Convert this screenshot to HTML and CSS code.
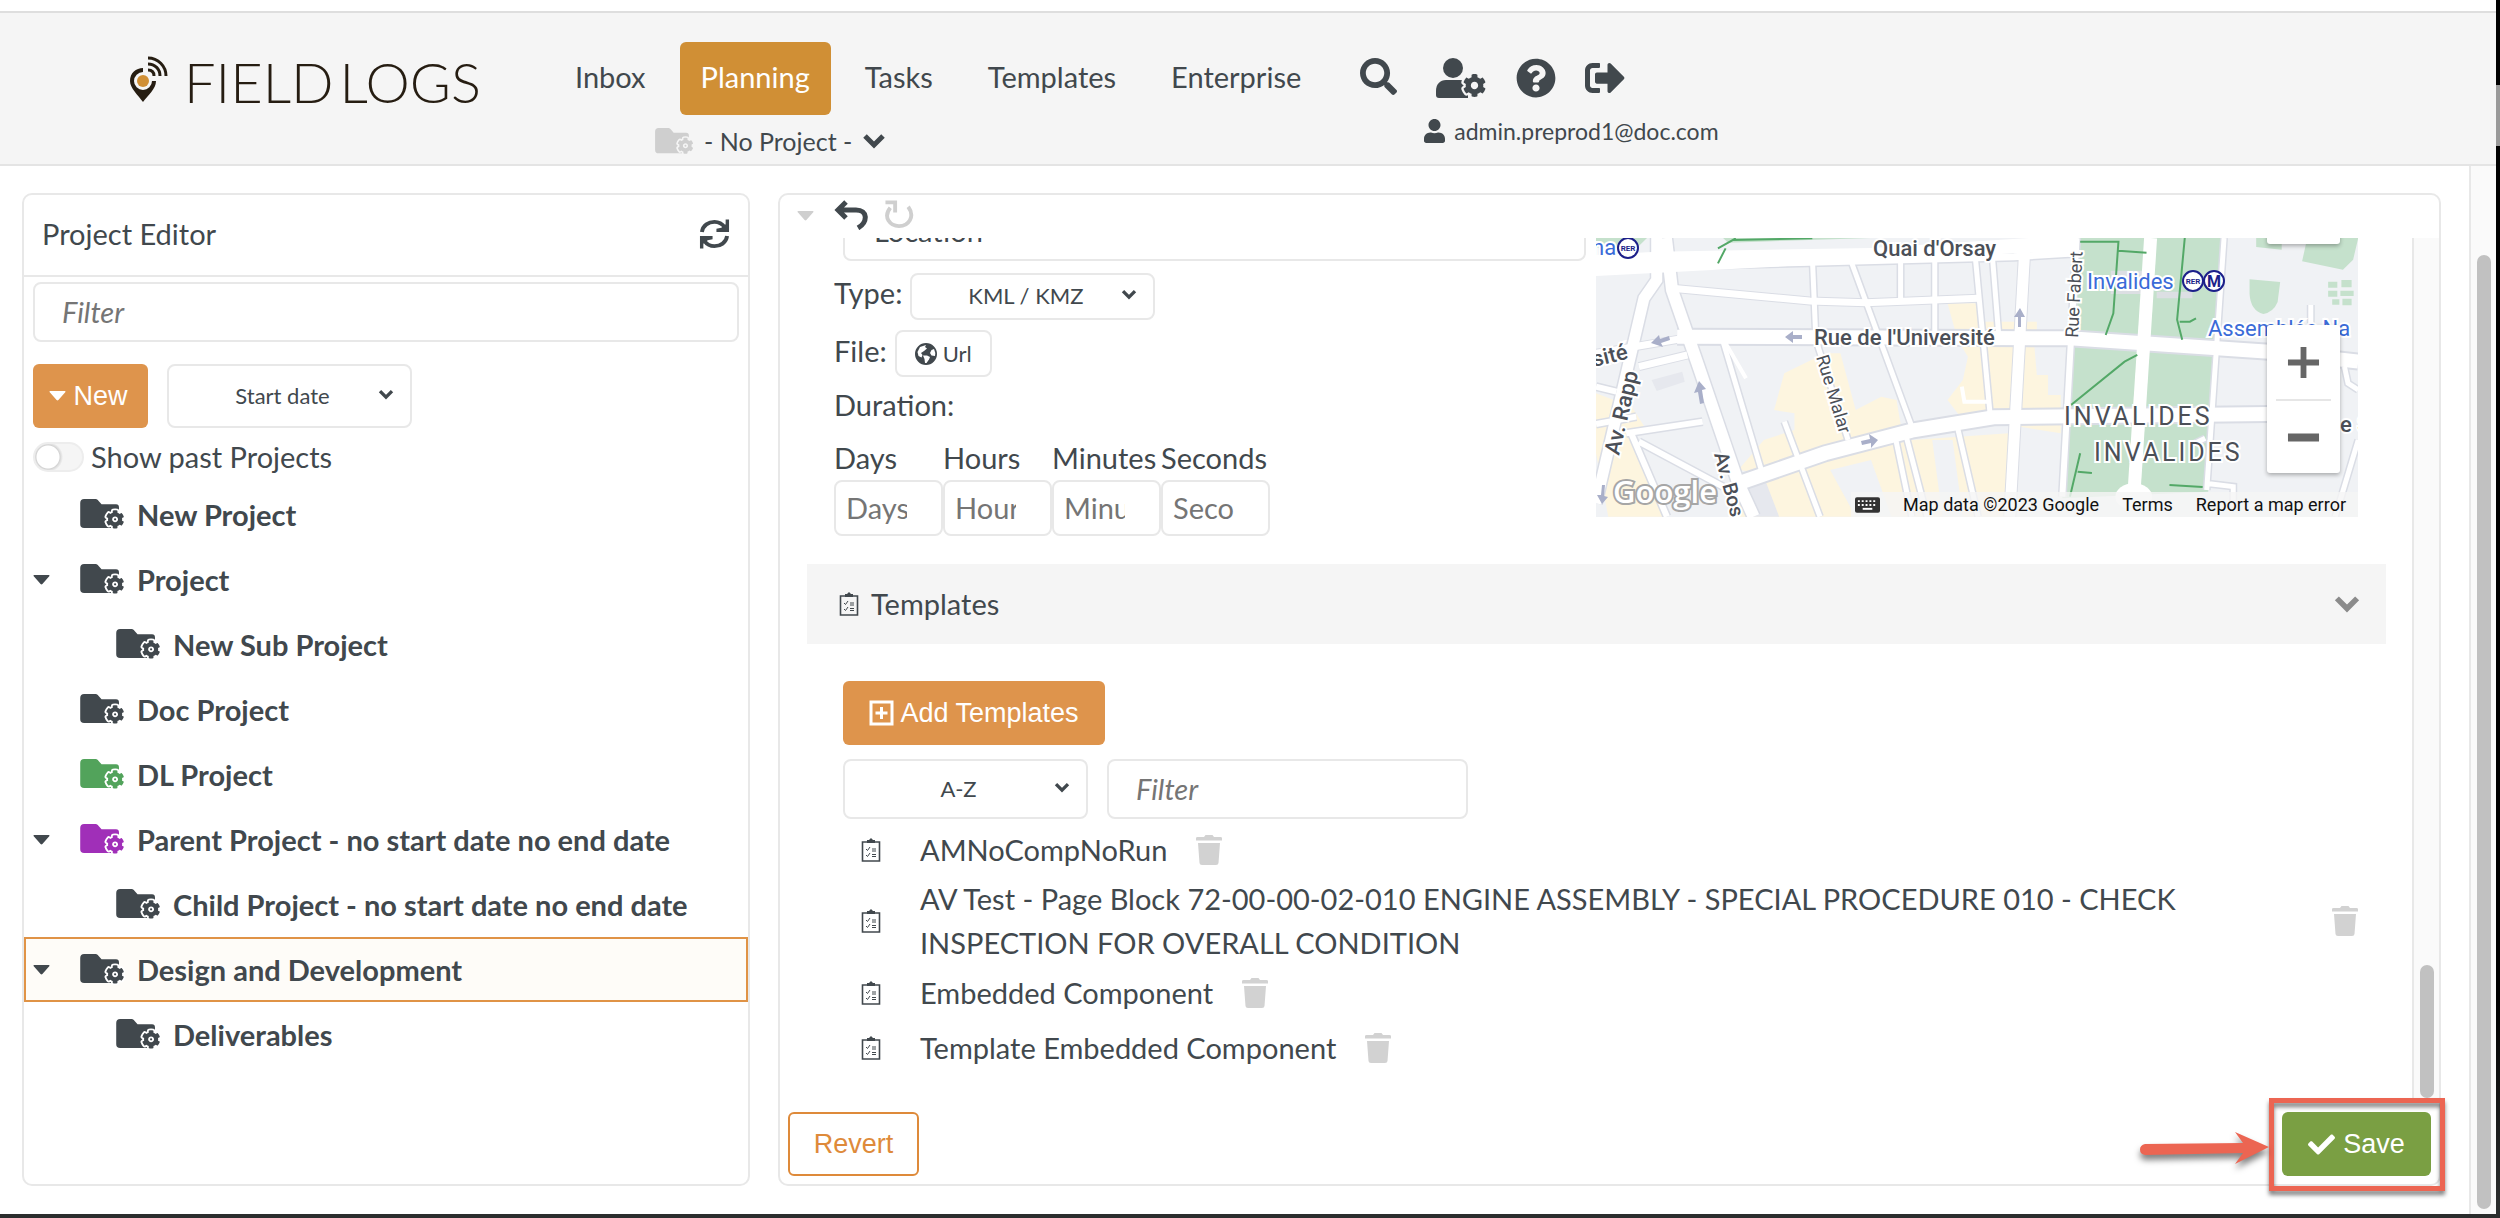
FILE: index.html
```html
<!DOCTYPE html>
<html lang="en">
<head>
<meta charset="UTF-8">
<meta name="viewport" content="width=device-width, initial-scale=1">
<title>Field Logs - Planning</title>
<link rel="stylesheet" href="styles.css">
</head>
<body>

<!-- shared icons -->
<svg class="sprite" aria-hidden="true">
  <symbol id="i-search" viewBox="0 0 512 512"><path d="M505 442.7L405.3 343c-4.5-4.5-10.6-7-17-7H372c27.6-35.3 44-79.7 44-128C416 93.1 322.9 0 208 0S0 93.1 0 208s93.1 208 208 208c48.3 0 92.7-16.4 128-44v16.3c0 6.4 2.5 12.5 7 17l99.7 99.7c9.4 9.4 24.6 9.4 33.9 0l28.3-28.3c9.4-9.4 9.4-24.6.1-34zM208 336c-70.7 0-128-57.2-128-128 0-70.7 57.2-128 128-128 70.7 0 128 57.2 128 128 0 70.7-57.2 128-128 128z"/></symbol>
  <symbol id="i-help" viewBox="0 0 512 512"><path d="M504 256c0 136.997-111.043 248-248 248S8 392.997 8 256C8 119.083 119.043 8 256 8s248 111.083 248 248zM262.655 90c-54.497 0-89.255 22.957-116.549 63.758-3.536 5.286-2.353 12.415 2.715 16.258l34.699 26.31c5.205 3.947 12.621 3.008 16.665-2.122 17.864-22.658 30.113-35.797 57.303-35.797 20.429 0 45.698 13.148 45.698 32.958 0 14.976-12.363 22.667-32.534 33.976C247.128 238.528 216 254.941 216 296v4c0 6.627 5.373 12 12 12h56c6.627 0 12-5.373 12-12v-1.333c0-28.462 83.186-29.647 83.186-106.667 0-58.002-60.165-102-116.531-102zM256 338c-25.365 0-46 20.635-46 46 0 25.364 20.635 46 46 46s46-20.636 46-46c0-25.365-20.635-46-46-46z"/></symbol>
  <symbol id="i-logout" viewBox="0 0 512 512"><path d="M497 273L329 441c-15 15-41 4.5-41-17v-96H152c-13.3 0-24-10.7-24-24v-96c0-13.3 10.7-24 24-24h136V88c0-21.4 25.9-32 41-17l168 168c9.3 9.4 9.3 24.6 0 34zM192 436v-40c0-6.6-5.4-12-12-12H96c-17.7 0-32-14.3-32-32V160c0-17.7 14.3-32 32-32h84c6.6 0 12-5.4 12-12V76c0-6.6-5.4-12-12-12H96c-53 0-96 43-96 96v192c0 53 43 96 96 96h84c6.6 0 12-5.4 12-12z"/></symbol>
  <symbol id="i-user" viewBox="0 0 448 512"><path d="M224 256c70.7 0 128-57.3 128-128S294.7 0 224 0 96 57.3 96 128s57.3 128 128 128zm89.6 32h-16.7c-22.2 10.2-46.9 16-72.9 16s-50.6-5.8-72.9-16h-16.7C60.2 288 0 348.2 0 422.4V464c0 26.5 21.5 48 48 48h352c26.5 0 48-21.5 48-48v-41.6c0-74.2-60.2-134.4-134.4-134.4z"/></symbol>
  <symbol id="i-cog" viewBox="-60 -60 632 632"><path d="M487.4 315.7l-42.6-24.6c4.3-23.2 4.3-47 0-70.2l42.6-24.6c4.9-2.8 7.1-8.6 5.5-14-11.1-35.6-30-67.8-54.7-94.6-3.8-4.1-10-5.1-14.8-2.3L380.8 110c-17.9-15.4-38.5-27.3-60.8-35.1V25.8c0-5.6-3.9-10.5-9.4-11.7-36.7-8.2-74.3-7.8-109.2 0-5.5 1.2-9.4 6.1-9.4 11.7V75c-22.2 7.9-42.8 19.8-60.8 35.1L88.7 85.5c-4.9-2.8-11-1.9-14.8 2.3-24.7 26.7-43.6 58.9-54.7 94.6-1.7 5.4.6 11.2 5.5 14L67.3 221c-4.3 23.2-4.3 47 0 70.2l-42.6 24.6c-4.9 2.8-7.1 8.6-5.5 14 11.1 35.6 30 67.8 54.7 94.6 3.8 4.1 10 5.1 14.8 2.3l42.6-24.6c17.9 15.4 38.5 27.3 60.8 35.1v49.2c0 5.6 3.9 10.5 9.4 11.7 36.7 8.2 74.3 7.8 109.2 0 5.5-1.2 9.4-6.1 9.4-11.7v-49.2c22.2-7.9 42.8-19.8 60.8-35.1l42.6 24.6c4.9 2.8 11 1.9 14.8-2.3 24.7-26.7 43.6-58.9 54.7-94.6 1.5-5.5-.7-11.3-5.6-14.1zM256 336c-44.1 0-80-35.9-80-80s35.9-80 80-80 80 35.9 80 80-35.9 80-80 80z"/></symbol>
  <symbol id="i-usercog" viewBox="0 0 52 42">
    <circle cx="18" cy="11" r="10"/><path d="M11 23h14c3 0 6 2 8 5v13H4c-2 0-3-1-3-3v-4c0-7 4-11 10-11z"/>
    <use href="#i-cog" class="halo" x="25" y="14" width="29" height="29"/>
  </symbol>
  <symbol id="i-folder" viewBox="0 0 46 32">
    <path d="M4 0h11c2 0 3 .6 4 2l3 3.500h15c2 0 3 1 3 3V30H4c-2.500 0-4-1.500-4-4V4c0-2.500 1.500-4 4-4z"/>
    <use href="#i-cog" class="halo" x="24" y="9" width="24" height="24"/>
  </symbol>
  <symbol id="i-down" viewBox="0 0 24 16"><path d="M3 3l9 9 9-9" class="line" stroke-width="5"/></symbol>
  <symbol id="i-caret" viewBox="0 0 18 11"><path d="M1 0h16c1 0 1 1 .5 1.500L10 10c-.6.700-1.400.7-2 0L.5 1.500C0 1 0 0 1 0z"/></symbol>
  <symbol id="i-refresh" viewBox="0 0 32 30">
    <path d="M3 13C4 6 10 2.500 16 2.500c4.500 0 8 2 10.500 5.500M29 17c-1 7-7 10.500-13 10.500-4.500 0-8-2-10.500-5.500" class="line" stroke-width="4"/>
    <path d="M31 0v13H18v-3.500l5-1L27.500 5V0zM1 30V17h13v3.500l-5 1L4.500 25v5z"/>
  </symbol>
  <symbol id="i-undo" viewBox="0 0 34 30"><path d="M12 2L4 10 12 18M4 10h18c12 0 12 12 2 18" class="line" stroke-width="5"/></symbol>
  <symbol id="i-redo" viewBox="0 0 30 30"><path d="M6 8c-8 10 0 19 9 19 10 0 17-10 9.500-20M1 2.500h10V13" class="line" stroke-width="4"/></symbol>
  <symbol id="i-clip" viewBox="0 0 20 24">
    <path d="M1.500 4h17v19h-17z" class="line" stroke-width="1.600"/><path d="M6 5V2h2l2-2 2 2h2v3z"/>
    <path d="M5 11l1.500 1.500L9 9M5 17l1.500 1.500L9 15M11 11h4M11 13h4M11 16.500h4M11 18.500h4" class="line" stroke-width="1"/>
  </symbol>
  <symbol id="i-trash" viewBox="0 0 26 30"><path d="M1.500 2H8l1.500-2h7L18 2h6.500q1.500 0 1.500 1.300V5.500H0V3.300Q0 2 1.500 2zM2 8h22l-1.500 20q-.2 2-2.500 2H6q-2.300 0-2.500-2z"/></symbol>
  <symbol id="i-check" viewBox="0 0 512 512"><path d="M173.898 439.404l-166.4-166.4c-9.997-9.997-9.997-26.206 0-36.204l36.203-36.204c9.997-9.998 26.207-9.998 36.204 0L192 312.690 432.095 72.596c9.997-9.997 26.207-9.997 36.204 0l36.203 36.204c9.997 9.997 9.997 26.206 0 36.204l-294.400 294.401c-9.998 9.997-26.207 9.997-36.204-.001z"/></symbol>
  <symbol id="i-globe" viewBox="0 0 22 22"><path fill-rule="evenodd" d="M11 0a11 11 0 1 0 0 22 11 11 0 0 0 0-22zM11 2L5 4 2.500 9l1 4 3 1.500 1-2.500L6 10l3-2 3-2.500L10 4zM8 12.500l1.500 3.500.5 4 1.500 0 2.500-3.500 1-2.500-3-1.500zM19 6l-2.500 1-1.500 3 1.500 2.500 3.500.5q.8-3.500-1-7z"/></symbol>
  <symbol id="i-plus" viewBox="0 0 25 26"><path d="M2 2h21v22H2zM12.500 7v12M6.500 13h12" class="line" stroke-width="3"/></symbol>
</svg>

<div class="app">
  <header class="header">
    <a class="logo" href="#">
      <svg class="logo-mark" viewBox="0 0 38 46">
        <path d="M13 12C6 12 0 17 0 25c0 7 8 14 13 21 5-7 13-13 13-21h-4a9 9 0 1 1-9-9z" fill="#261d12"/>
        <circle cx="13" cy="25" r="6" fill="#d08f35"/>
        <path d="M18 2c10 0 18 8 18 18M18 8c7 0 12 5 12 12M18 14c4 0 6 2 6 6" fill="none" stroke="#261d12" stroke-width="3"/>
      </svg>
      <span>FIELD</span><span>LOGS</span>
    </a>
    <div class="menu">
      <nav class="nav">
        <a href="#">Inbox</a>
        <a href="#" class="active">Planning</a>
        <a href="#">Tasks</a>
        <a href="#">Templates</a>
        <a href="#">Enterprise</a>
      </nav>
      <button class="project-picker">
        <svg class="folder muted"><use href="#i-folder"/></svg>
        - No Project -
        <svg class="picker-arrow"><use href="#i-down"/></svg>
      </button>
    </div>
    <div class="account">
      <div class="tools">
        <button aria-label="Search"><svg class="tool-search"><use href="#i-search"/></svg></button>
        <button aria-label="User settings"><svg class="tool-user"><use href="#i-usercog"/></svg></button>
        <button aria-label="Help"><svg><use href="#i-help"/></svg></button>
        <button aria-label="Log out"><svg><use href="#i-logout"/></svg></button>
      </div>
      <div class="who"><svg><use href="#i-user"/></svg>admin.preprod1@doc.com</div>
    </div>
  </header>

  <div class="page">
    <main class="content">
      <section class="panel sidebar">
        <div class="panel-head">
          <h2>Project Editor</h2>
          <button aria-label="Refresh"><svg class="refresh"><use href="#i-refresh"/></svg></button>
        </div>
        <div class="sidebar-tools">
          <input class="field filter" type="text" placeholder="Filter" aria-label="Filter projects">
          <div class="row">
            <button class="btn btn-orange btn-new"><svg class="caret"><use href="#i-caret"/></svg>New</button>
            <span class="select"><select class="tall" aria-label="Sort projects"><option>Start date</option></select><svg><use href="#i-down"/></svg></span>
          </div>
          <label class="toggle"><input type="checkbox">Show past Projects</label>
        </div>
        <ul class="tree">
          <li><svg class="folder"><use href="#i-folder"/></svg>New Project</li>
          <li class="open"><svg class="caret"><use href="#i-caret"/></svg><svg class="folder"><use href="#i-folder"/></svg>Project</li>
          <li class="child"><svg class="folder"><use href="#i-folder"/></svg>New Sub Project</li>
          <li><svg class="folder"><use href="#i-folder"/></svg>Doc Project</li>
          <li><svg class="folder green"><use href="#i-folder"/></svg>DL Project</li>
          <li class="open"><svg class="caret"><use href="#i-caret"/></svg><svg class="folder purple"><use href="#i-folder"/></svg>Parent Project - no start date no end date</li>
          <li class="child"><svg class="folder"><use href="#i-folder"/></svg>Child Project - no start date no end date</li>
          <li class="open selected"><svg class="caret"><use href="#i-caret"/></svg><svg class="folder"><use href="#i-folder"/></svg>Design and Development</li>
          <li class="child"><svg class="folder"><use href="#i-folder"/></svg>Deliverables</li>
        </ul>
      </section>

      <section class="panel editor">
        <div class="editor-bar">
          <svg class="caret muted"><use href="#i-caret"/></svg>
          <button aria-label="Undo"><svg class="undo"><use href="#i-undo"/></svg></button>
          <button aria-label="Redo" disabled><svg class="redo"><use href="#i-redo"/></svg></button>
        </div>
        <div class="editor-body">
          <div class="scroll">
            <div class="location">
              <form class="form">
                <input class="field place" type="text" value="Location" aria-label="Location">
                <div class="line-row">
                  <label for="type">Type:</label>
                  <span class="select"><select id="type"><option>KML / KMZ</option></select><svg><use href="#i-down"/></svg></span>
                </div>
                <div class="line-row">
                  <span>File:</span>
                  <button type="button" class="btn-url"><svg><use href="#i-globe"/></svg>Url</button>
                </div>
                <p class="caption">Duration:</p>
                <div class="duration">
                  <label>Days<input class="field" type="text" placeholder="Days"></label>
                  <label>Hours<input class="field" type="text" placeholder="Hours"></label>
                  <label>Minutes<input class="field" type="text" placeholder="Minutes"></label>
                  <label>Seconds<input class="field" type="text" placeholder="Seconds"></label>
                </div>
              </form>
              <div class="map">
                <svg class="map-art" viewBox="0 0 762 279" preserveAspectRatio="xMinYMin slice">
                  <rect width="762" height="279" fill="#f0f2f5"/>
                  <g class="shapes" transform="scale(.5102 .3333) translate(-31 -54)">
                    <g fill="#fdf5df">
                      <path d="M720 250h55l8 55h112v30h-30v40h25l5 90h22v60h25v115L820 610l-140 30-320 120-50-10 50-90 60-30v-50l-40-10 20-110 80-60h30l30 170 50-40 30 10 10 90 120-30-30-60 30-60 10-70-20-50z"/>
                      <path d="M310 790l150-60 190-70 190-20v250H290zM31 520l70 40 25 60-30 30 75 240H55L31 700z"/>
                    </g>
                    <g fill="#f0f2f5"><path d="M690 660h40l20 230h-40zM490 750l80-30 40 170h-70z"/></g>
                    <g fill="#e6e8ee"><path d="M140 480l60-25 5 30-55 28zM320 790l40-20 30 120h-50z"/></g>
                    <g fill="#c5e1cc">
                      <path d="M975 54h288l-32 761-286 20 18-470z"/>
                      <path d="M1325 54h50v35l-50-8zM1425 54h100l-10 65-20 30-80-25zM1312 178l60 8-5 60q-8 30-28 36-25-10-27-60zM1466 185h18v18h-18zM1492 180h20v22h-20zM1466 212h18v18h-18zM1490 212h26v16h-26zM1474 238h14v16h-14zM1494 236h18v20h-18z"/>
                      <path d="M31 54h100l-20 30H31zM280 54h290l-280 14z"/>
                    </g>
                    <path d="M1040 152h70v70h-70zM1130 215h70v20h-70z" fill="#dcdfe3"/>
                    <g class="case">
                      <path stroke-width="10" d="M180 137L450 127 850 110 975 98"/>
                      <path stroke-width="14" d="M150 54V180L125 235 31 850"/>
                      <path stroke-width="15" d="M168 54L180 210 232 440 310 790 340 890"/>
                      <path stroke-width="9" d="M180 205L450 243 560 248 780 235M31 400L215 352M115 440l95-35"/>
                      <path stroke-width="8" d="M455 110L462 360 525 660M530 120L650 620M628 115V235M695 110V335M775 120L803 575M808 110L820 340M280 365L355 750M400 605L470 890M618 655L650 890M640 655L680 890M740 625L780 890"/>
                      <path stroke-width="13" d="M872 70L842 890"/>
                      <path stroke-width="9" d="M973 54L945 830M90 640L240 605M100 640L170 890M115 665L280 800M31 612L110 590M31 500l40 15"/>
                      <path stroke-width="8" d="M1262 54L1228 810M1498 440L1505 490 1525 510M1525 660L1480 890M1225 790l55 10v50M1432 255v80M1225 655l-20 15"/>
                      <path stroke-width="18" d="M190 350L960 355 1350 395 1525 425M310 790L480 700 650 632 810 592 1350 582"/>
                    </g>
                    <path d="M31 105L150 95 570 84 880 54H975V92L850 100 570 125 31 168z" fill="#fff"/>
                    <g class="road">
                      <path stroke-width="7" d="M180 137L450 127 850 110 975 98"/>
                      <path stroke-width="11" d="M150 54V180L125 235 31 850"/>
                      <path stroke-width="12" d="M168 54L180 210 232 440 310 790 340 890"/>
                      <path stroke-width="7" d="M180 205L450 243 560 248 780 235M31 400L215 352M115 440l95-35"/>
                      <path stroke-width="5" d="M455 110L462 360 525 660M530 120L650 620M628 115V235M695 110V335M775 120L803 575M808 110L820 340M280 365L355 750M400 605L470 890M618 655L650 890M640 655L680 890M740 625L780 890"/>
                      <path stroke-width="11" d="M872 70L842 890"/>
                      <path stroke-width="6" d="M973 54L945 830M90 640L240 605M100 640L170 890M115 665L280 800M31 612L110 590M31 500l40 15"/>
                      <path stroke-width="5" d="M1262 54L1228 810M1498 440L1505 490 1525 510M1525 660L1480 890M1225 790l55 10v50M1432 255v80M1225 655l-20 15"/>
                      <path stroke-width="14" d="M190 350L960 355 1350 395 1525 425M310 790L480 700 650 632 810 592 1350 582"/>
                      <path stroke-width="13" d="M1118 54L1085 830"/>
                      <path stroke-width="4" d="M285 370l40 105M748 500l5 45h50"/>
                    </g>
                    <ellipse cx="1085" cy="830" rx="36" ry="40" fill="#fff"/>
                    <path class="trail" d="M980 65h75l-10 215-15 65M1055 92l55 6M1185 54l-15 245 10 60M1175 305h20l12-10M1092 405l-25 20-105 130M980 700l-20 130M975 755l28 4M1155 795l65 6M270 85l35-30M285 85l-15 45M300 60l155-5"/>
                  </g>
                  <g class="arrows">
                    <path d="M189 99l8-6v4h9v4h-9v4zM55 105l8-8 1 4 9-3 1 4-9 3 2 4zM103 143l7 8-4 1 2 13-4 1-2-12-4 1zM424 70l5 9h-4v10h-3V79h-4zM282 202l-9-6 1 5-9 2 1 4 9-2v5zM6 266l-5-9 4 0 1-10 3 0-1 11 4 1z"/>
                  </g>
                  <g class="labels">
                    <text x="277" y="18">Quai d'Orsay</text>
                    <text x="218" y="107">Rue de l'Université</text>
                    <text x="-2" y="129" transform="rotate(-14 -2 129)">sité</text>
                    <text x="744" y="194">e S</text>
                    <text class="small" x="482" y="100" transform="rotate(-87 482 100)">Rue Fabert</text>
                    <text class="small" x="220" y="119" transform="rotate(73 220 119)">Rue Malar</text>
                    <text x="23" y="218" transform="rotate(-77 23 218)">Av. Rapp</text>
                    <text class="avenue" x="118" y="216" transform="rotate(75 118 216)">Av. Bos</text>
                    <text class="area" x="468" y="187">INVALIDES</text>
                    <text class="area" x="498" y="223">INVALIDES</text>
                    <text class="blue" x="-4" y="17">na</text>
                    <text class="blue" x="491" y="51">Invalides</text>
                    <text class="blue" x="612" y="98">Assemblée Na</text>
                  </g>
                  <g class="stations">
                    <circle cx="32" cy="10" r="10"/><circle cx="597" cy="43" r="10"/><circle cx="618" cy="43" r="10"/>
                    <text x="32" y="13">RER</text><text x="597" y="46">RER</text><text class="metro" x="618" y="49">M</text>
                  </g>
                  <text class="google" x="17" y="265">Google</text>
                </svg>
                <div class="map-type"></div>
                <div class="zoom">
                  <button aria-label="Zoom in"><svg viewBox="0 0 34 34"><path d="M14 1h6v13h13v6H20v13h-6V20H1v-6h13z"/></svg></button>
                  <button aria-label="Zoom out"><svg viewBox="0 0 34 34"><path d="M1 13h32v8H1z"/></svg></button>
                </div>
                <div class="map-legal">
                  <svg class="keys" viewBox="0 0 26 16"><rect width="26" height="16" rx="2"/><path d="M3 4h20M3 8h20" stroke="#fff" stroke-width="2" stroke-dasharray="2 2"/><path d="M8 12h10" stroke="#fff" stroke-width="2"/></svg>
                  <span>Map data ©2023 Google</span>
                  <a href="#">Terms</a>
                  <a href="#">Report a map error</a>
                </div>
              </div>
            </div>

            <div class="section-head">
              <svg class="clip"><use href="#i-clip"/></svg>
              <h3>Templates</h3>
              <svg class="section-arrow"><use href="#i-down"/></svg>
            </div>

            <div class="templates">
              <button class="btn btn-orange btn-add"><svg><use href="#i-plus"/></svg>Add Templates</button>
              <div class="row">
                <span class="select"><select class="mid" aria-label="Sort templates"><option>A-Z</option></select><svg><use href="#i-down"/></svg></span>
                <input class="field filter" type="text" placeholder="Filter" aria-label="Filter templates">
              </div>
              <ul class="template-list">
                <li><svg class="clip"><use href="#i-clip"/></svg><span>AMNoCompNoRun</span><button aria-label="Delete"><svg class="trash"><use href="#i-trash"/></svg></button></li>
                <li><svg class="clip"><use href="#i-clip"/></svg><span>AV Test - Page Block 72-00-00-02-010 ENGINE ASSEMBLY - SPECIAL PROCEDURE 010 - CHECK INSPECTION FOR OVERALL CONDITION</span><button aria-label="Delete"><svg class="trash"><use href="#i-trash"/></svg></button></li>
                <li><svg class="clip"><use href="#i-clip"/></svg><span>Embedded Component</span><button aria-label="Delete"><svg class="trash"><use href="#i-trash"/></svg></button></li>
                <li><svg class="clip"><use href="#i-clip"/></svg><span>Template Embedded Component</span><button aria-label="Delete"><svg class="trash"><use href="#i-trash"/></svg></button></li>
              </ul>
            </div>
          </div>
          <div class="track inner"><div class="thumb"></div></div>
        </div>
        <div class="editor-foot">
          <button class="btn btn-outline">Revert</button>
          <div class="save-wrap">
            <button class="btn btn-green"><svg><use href="#i-check"/></svg>Save</button>
            <div class="highlight"></div>
            <svg class="pointer" viewBox="0 0 130 32"><path d="M5 12l98-1-8-11 34 15-34 17 8-11-98 2q-5-1-5-5.500T5 12z"/></svg>
          </div>
        </div>
      </section>
    </main>
    <div class="track outer"><div class="thumb"></div></div>
  </div>
</div>

</body>
</html>
```
FILE: styles.css
```css
* { box-sizing: border-box; }
body {
  margin: 0;
  height: 100vh;
  padding: 0 4px 4px 0;
  display: flex;
  background: linear-gradient(#000 85px, #999 85px, #999 146px, #000 146px, #000 1000px, #2b2d2d 1200px);
  font-family: Lato, "Liberation Sans", sans-serif;
  font-size: 29px;
  line-height: 44px;
  color: #41484d;
}
h2, h3, p, ul { margin: 0; padding: 0; font-size: 29px; font-weight: normal; }
ul { list-style: none; }
a { color: inherit; text-decoration: none; }
svg { display: block; fill: currentColor; flex: none; }
button {
  font: inherit;
  color: inherit;
  background: none;
  border: none;
  padding: 0;
  cursor: pointer;
}
.sprite { position: absolute; width: 0; height: 0; }
.line { fill: none; stroke: currentColor; }
.halo { stroke: var(--halo, #fff); stroke-width: 100px; paint-order: stroke; }
.muted { color: #cfcfcf; }

.app {
  flex: 1;
  min-width: 0;
  display: flex;
  flex-direction: column;
  background: #fff;
  padding-top: 11px;
}

/* header */
.header {
  --halo: #f5f5f5;
  display: flex;
  align-items: flex-start;
  height: 155px;
  padding: 29px 0 0 130px;
  background: #f5f5f5;
  border-top: 2px solid #dedede;
  border-bottom: 2px solid #e4e4e4;
}
.logo {
  display: flex;
  align-items: center;
  gap: 6px;
  width: 424px;
  height: 80px;
  font-size: 56px;
  font-weight: 300;
  color: #261d12;
}
.logo-mark { width: 38px; height: 46px; margin: 0 10px 6px 0; }
.nav { display: flex; gap: 13px; }
.nav a {
  height: 73px;
  line-height: 70px;
  padding: 0 21px;
  border-radius: 6px;
}
.nav .active { background: #d08f35; color: #fff; }
.project-picker {
  display: flex;
  align-items: center;
  gap: 10px;
  height: 52px;
  margin-left: 101px;
  font-size: 25px;
}
.project-picker .folder { width: 39px; height: 27px; }
.picker-arrow { width: 24px; height: 16px; }
.account { margin-left: 38px; }
.tools { display: flex; align-items: center; gap: 29px; height: 72px; }
.tools svg { width: 40px; height: 40px; }
.tools .tool-search { width: 37px; height: 37px; margin: 0 9px 4px 0; }
.tools .tool-user { width: 52px; height: 42px; }
.who {
  display: flex;
  align-items: center;
  gap: 9px;
  margin-left: 64px;
  height: 34px;
  font-size: 23px;
}
.who svg { width: 21px; height: 24px; }

/* page */
.page { flex: 1; display: flex; min-height: 0; }
.content {
  flex: 1;
  display: flex;
  gap: 28px;
  padding: 27px 28px 28px 22px;
  min-width: 0;
}
.panel {
  display: flex;
  flex-direction: column;
  border: 2px solid #e8e8e8;
  border-radius: 10px;
}
.track {
  display: flex;
  justify-content: center;
  width: 27px;
  background: #fafafa;
  border-left: 2px solid #e8e8e8;
}
.thumb { width: 14px; border-radius: 7px; background: #c1c1c1; }
.outer .thumb { margin: 89px 0 5px; }
.inner .thumb { align-self: flex-end; height: 133px; }
.field {
  height: 60px;
  border: 2px solid #e8e8e8;
  border-radius: 8px;
  background: #fff;
  font: inherit;
  color: inherit;
}
.field::placeholder { color: #757575; opacity: 1; }
.filter { padding: 0 27px 2px; }
.filter::placeholder { font-style: italic; }
.row { display: flex; gap: 19px; }
.select { position: relative; width: 245px; }
.select select {
  appearance: none;
  width: 100%;
  height: 47px;
  padding: 0 14px 0 0;
  border: 2px solid #e8e8e8;
  border-radius: 8px;
  background: #fff;
  color: inherit;
  font: inherit;
  font-size: 22px;
  text-align: center;
  text-align-last: center;
}
.select .tall { height: 64px; }
.select .mid { height: 60px; }
.select svg {
  position: absolute;
  right: 18px;
  top: calc(50% - 7px);
  width: 16px;
  height: 11px;
  pointer-events: none;
}
.btn {
  display: flex;
  align-items: center;
  justify-content: center;
  height: 64px;
  border-radius: 6px;
  font-family: "Liberation Sans", Arial, sans-serif;
  font-size: 27px;
}
.btn-orange { background: #de944c; color: #fff; }
.caret { width: 17px; height: 10px; }

/* project list */
.sidebar { width: 728px; }
.panel-head {
  display: flex;
  align-items: center;
  justify-content: space-between;
  height: 82px;
  padding: 0 18px 2px;
  border-bottom: 2px solid #e8e8e8;
}
.refresh { width: 31px; height: 30px; }
.sidebar-tools { padding: 5px 9px 0; }
.sidebar-tools .filter { width: 100%; margin-bottom: 22px; display: block; }
.btn-new { width: 115px; gap: 7px; padding-right: 4px; }
.toggle { display: flex; align-items: center; gap: 7px; height: 50px; margin-top: 4px; }
.toggle input {
  appearance: none;
  width: 51px;
  height: 30px;
  margin: 0;
  border: 2px solid #ededed;
  border-radius: 15px;
  background: radial-gradient(circle at 13px 13px, #fff 11px, #d4d4d4 12px, #f5f5f5 15px);
}
.tree li {
  display: flex;
  align-items: center;
  gap: 12px;
  height: 65px;
  padding-left: 56px;
  font-weight: bold;
}
.tree .child { padding-left: 92px; }
.tree .open { padding-left: 9px; }
.tree .open .caret { margin-right: 18px; }
.tree .selected {
  padding-left: 7px;
  border: 2px solid #e09346;
  background: #fefcf8;
}
.folder { width: 45px; height: 31px; }
.green { color: #52a35b; }
.purple { color: #a02fb8; }

/* editor */
.editor { flex: 1; min-width: 0; }
.editor-bar { display: flex; align-items: flex-start; height: 43px; padding: 5px 17px; }
.editor-bar .caret { margin: 11px 20px 0 0; }
.undo { width: 34px; height: 30px; margin-right: 16px; }
.redo { width: 30px; height: 29px; color: #cfcfcf; }
.editor-body { flex: 1; display: flex; min-height: 0; }
.scroll { flex: 1; min-width: 0; padding: 0 26px 0 27px; overflow: hidden; }
.location {
  display: grid;
  grid-template-columns: 1fr 1fr;
  height: 326px;
  margin: 0 28px 0 27px;
}
.place {
  display: block;
  width: calc(100% - 19px);
  margin: -37px 10px 11px 9px;
  padding: 0 29px 2px;
}
.line-row { display: flex; gap: 8px; height: 47px; margin-bottom: 11px; line-height: 42px; }
.btn-url {
  display: flex;
  align-items: center;
  gap: 6px;
  padding: 0 18px;
  border: 2px solid #e8e8e8;
  border-radius: 8px;
  font-size: 22px;
}
.btn-url svg { width: 22px; height: 22px; }
.caption { line-height: 34px; }
.duration { display: flex; margin-top: 14px; }
.duration label { width: 109px; }
.duration .field { display: block; width: 109px; height: 56px; padding: 0 34px 2px 10px; }

.map { position: relative; height: 279px; overflow: hidden; }
.map-art { width: 100%; height: 279px; font-family: Roboto, sans-serif; font-size: 22px; }
.shapes path { vector-effect: non-scaling-stroke; }
.case path { fill: none; stroke: #dadde5; }
.road path { fill: none; stroke: #fff; }
.shapes .trail { fill: none; stroke: #53a867; stroke-width: 2px; }
.arrows { fill: #a9afc9; }
.labels text { fill: #4b4f57; stroke: #fff; stroke-width: 4px; paint-order: stroke; font-weight: 500; }
.labels .small { font-size: 18px; font-weight: 400; }
.labels .avenue { font-size: 20px; }
.labels .area { font-size: 25px; letter-spacing: 3px; font-weight: 400; }
.labels .blue { fill: #3a6bd8; font-weight: 400; }
.stations circle { fill: #fff; stroke: #1c1f8a; stroke-width: 2px; }
.stations text { fill: #1c1f8a; font-size: 8px; font-weight: bold; text-anchor: middle; }
.stations .metro { font-size: 16px; }
.google {
  font-family: "Open Sans", sans-serif;
  font-size: 31px;
  font-weight: 600;
  fill: #fff;
  stroke: #a6a6a6;
  stroke-width: 4px;
  paint-order: stroke;
}
.map-type, .zoom {
  position: absolute;
  right: 18px;
  width: 73px;
  background: #fff;
  border-radius: 3px;
  box-shadow: 0 2px 4px rgba(0,0,0,.3);
}
.map-type { top: -20px; height: 26px; }
.zoom { top: 87px; padding: 0 9px; color: #666; }
.zoom button { display: flex; align-items: center; justify-content: center; width: 55px; height: 74px; }
.zoom button + button { border-top: 2px solid #e6e6e6; }
.zoom svg { width: 33px; height: 33px; }
.map-legal {
  position: absolute;
  right: 0;
  bottom: 0;
  display: flex;
  align-items: center;
  gap: 23px;
  height: 25px;
  padding: 0 12px 0 4px;
  background: rgba(245,245,245,.8);
  color: #111;
  font-family: Roboto, sans-serif;
  font-size: 18px;
}
.keys { width: 25px; height: 16px; color: #333; }

.section-head {
  display: flex;
  align-items: center;
  gap: 12px;
  height: 80px;
  padding: 0 25px 0 32px;
  background: #f5f5f5;
}
.clip { width: 20px; height: 24px; }
.section-head h3 { flex: 1; }
.section-arrow { width: 28px; height: 18px; color: #8b8b8b; }
.templates { padding: 37px 28px 0 36px; }
.btn-add { width: 262px; gap: 6px; margin-bottom: 14px; }
.btn-add svg { width: 25px; height: 26px; }
.templates .filter { width: 361px; }
.template-list { margin-top: 3px; }
.template-list li { display: flex; align-items: center; min-height: 55px; padding-left: 18px; }
.template-list .clip { margin-right: 39px; }
.template-list span { margin-right: 29px; }
.trash { width: 26px; height: 30px; color: #d2d2d2; }

.editor-foot {
  display: flex;
  justify-content: space-between;
  padding: 14px 8px 8px;
}
.btn-outline { width: 131px; border: 2px solid #de8a3a; color: #de8a3a; }
.save-wrap { position: relative; }
.btn-green { width: 149px; gap: 8px; background: #7a9f43; color: #fff; }
.btn-green svg { width: 27px; height: 27px; }

/* tutorial marker around the save button */
.highlight {
  position: absolute;
  inset: -14px -14px -15px -13px;
  border: 5px solid #ec6552;
  filter: drop-shadow(0 4px 2px rgba(0,0,0,.5));
  pointer-events: none;
}
.pointer {
  position: absolute;
  right: 161px;
  top: 20px;
  width: 130px;
  height: 32px;
  overflow: visible;
  color: #ec6552;
  filter: drop-shadow(0 5px 3px rgba(0,0,0,.5));
}
```
